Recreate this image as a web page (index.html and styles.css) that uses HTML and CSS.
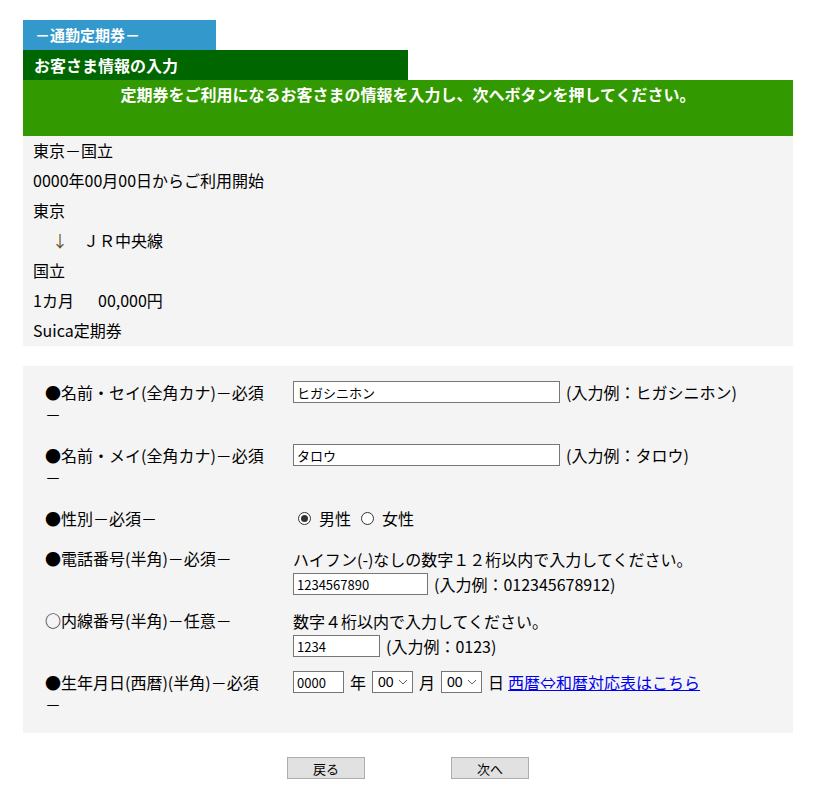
FILE: index.html
```html
<!DOCTYPE html>
<html lang="ja">
<head>
    <meta charset="UTF-8">
    <meta name="viewport" content="width=device-width, initial-scale=1.0">
    <title>お客さま情報の入力 - 通勤定期券</title>
    <link rel="stylesheet" href="styles.css">
</head>
<body>
    <div class="page">
        <div class="tab">－通勤定期券－</div>
        <h1 class="page-title">お客さま情報の入力</h1>
        <p class="lead">定期券をご利用になるお客さまの情報を入力し、次へボタンを押してください。</p>

        <!-- 選択済みの定期券内容 -->
        <div class="route">
            <div class="route-line">東京－国立</div>
            <div class="route-line">0000年00月00日からご利用開始</div>
            <div class="route-line">東京</div>
            <div class="route-line route-via"><span class="arrow">↓</span><span>ＪＲ中央線</span></div>
            <div class="route-line">国立</div>
            <div class="route-line"><span class="term">1カ月</span>00,000円</div>
            <div class="route-line">Suica定期券</div>
        </div>

        <form class="info-form" id="infoForm">
            <div class="form-row">
                <label class="form-label" for="seiKana">●名前・セイ(全角カナ)－必須<br>－</label>
                <div class="input-line">
                    <input class="text-input input-name" type="text" id="seiKana" value="ヒガシニホン">
                    <span>(入力例：ヒガシニホン)</span>
                </div>
            </div>
            <div class="form-row">
                <label class="form-label" for="meiKana">●名前・メイ(全角カナ)－必須<br>－</label>
                <div class="input-line">
                    <input class="text-input input-name" type="text" id="meiKana" value="タロウ">
                    <span>(入力例：タロウ)</span>
                </div>
            </div>
            <div class="form-row row-radio">
                <div class="form-label">●性別－必須－</div>
                <div class="radios">
                    <label class="radio"><input type="radio" name="sex" value="m" checked>男性</label>
                    <label class="radio"><input type="radio" name="sex" value="f">女性</label>
                </div>
            </div>
            <div class="form-row row-stacked">
                <label class="form-label" for="tel">●電話番号(半角)－必須－</label>
                <div>
                    <div class="hint">ハイフン(-)なしの数字１２桁以内で入力してください。</div>
                    <div class="input-line">
                        <input class="text-input input-tel" type="text" id="tel" value="1234567890">
                        <span>(入力例：012345678912)</span>
                    </div>
                </div>
            </div>
            <div class="form-row row-stacked">
                <label class="form-label" for="ext">○内線番号(半角)－任意－</label>
                <div>
                    <div class="hint">数字４桁以内で入力してください。</div>
                    <div class="input-line">
                        <input class="text-input input-ext" type="text" id="ext" value="1234">
                        <span>(入力例：0123)</span>
                    </div>
                </div>
            </div>
            <div class="form-row">
                <label class="form-label" for="birthYear">●生年月日(西暦)(半角)－必須<br>－</label>
                <div class="input-line">
                    <input class="text-input input-year" type="text" id="birthYear" value="0000">
                    <span>年</span>
                    <select class="select-input"><option>00</option></select>
                    <span>月</span>
                    <select class="select-input"><option>00</option></select>
                    <span>日</span>
                    <a href="#" class="calendar-link">西暦⇔和暦対応表はこちら</a>
                </div>
            </div>
        </form>

        <div class="actions">
            <button type="button" class="btn">戻る</button>
            <button type="submit" form="infoForm" class="btn">次へ</button>
        </div>
    </div>
</body>
</html>
```

FILE: styles.css
```css
:root {
    --tab-blue: #3399cc;
    --dark-green: #006600;
    --green: #339900;
    --panel: #f4f4f4;
    --text: #000000;
    --white: #ffffff;
    --input-border: #767676;
    --link: #0000ee;
}

body {
    font-family: "Noto Sans CJK JP", "Noto Sans", sans-serif;
    font-size: 16px;
    color: var(--text);
    margin: 0;
    padding: 20px 23px;
}

.page {
    width: 770px;
}

.tab {
    width: 193px;
    height: 30px;
    box-sizing: border-box;
    padding-left: 12px;
    line-height: 30px;
    background: var(--tab-blue);
    color: var(--white);
    font-size: 15px;
    font-weight: bold;
}

.page-title {
    width: 385px;
    height: 30px;
    box-sizing: border-box;
    margin: 0;
    padding-left: 11px;
    line-height: 30px;
    background: var(--dark-green);
    color: var(--white);
    font-size: 16px;
    font-weight: bold;
}

.lead {
    height: 56px;
    box-sizing: border-box;
    margin: 0;
    padding-top: 3px;
    line-height: 22px;
    background: var(--green);
    color: var(--white);
    font-weight: bold;
    text-align: center;
}

.route {
    background: var(--panel);
    padding: 0 10px;
}

.route-line {
    line-height: 28px;
    height: 30px;
}

.route-via .arrow {
    display: inline-block;
    width: 50px;
    padding-left: 19px;
    box-sizing: border-box;
    color: #6b4a2a;
}

.term {
    display: inline-block;
    width: 65px;
}

.info-form {
    margin-top: 20px;
    background: var(--panel);
    padding: 15px 22px 18px;
}

.form-row {
    display: grid;
    grid-template-columns: 248px 1fr;
    align-items: start;
    margin-bottom: 19px;
}

.row-radio {
    margin-bottom: 18px;
}

.row-stacked {
    margin-bottom: 14px;
}

.form-row:last-child {
    margin-bottom: 0;
}

.form-label {
    line-height: 22px;
}

.hint {
    line-height: 24px;
}

.input-line {
    display: flex;
    align-items: center;
    gap: 6px;
    height: 22px;
    line-height: 22px;
    white-space: nowrap;
}

.hint + .input-line {
    margin-top: 2px;
}

.text-input {
    height: 22px;
    box-sizing: border-box;
    margin: 0;
    border: 1px solid var(--input-border);
    padding: 1px 3px;
    font-family: "Noto Sans CJK JP", "Liberation Sans", sans-serif;
    font-size: 13px;
    background: var(--white);
    border-radius: 0;
    outline: none;
}

.input-name {
    width: 267px;
}

.input-tel {
    width: 135px;
}

.input-ext {
    width: 87px;
}

.input-year {
    width: 51px;
}

.radios {
    display: flex;
    gap: 10px;
    padding-left: 5px;
    line-height: 22px;
}

.radio {
    display: flex;
    align-items: center;
    gap: 8px;
}

.radio input {
    appearance: none;
    width: 13px;
    height: 13px;
    margin: 0;
    border: 1px solid #333;
    border-radius: 50%;
    background: var(--white);
    display: grid;
    place-content: center;
}

.radio input:checked::before {
    content: "";
    width: 7px;
    height: 7px;
    border-radius: 50%;
    background: #333;
}

.select-input {
    appearance: none;
    width: 41px;
    height: 22px;
    box-sizing: border-box;
    margin: 0;
    padding: 0 0 0 5px;
    border: 1px solid var(--input-border);
    border-radius: 0;
    font-size: 14px;
    font-family: "Liberation Sans", sans-serif;
    background: var(--white) url("data:image/svg+xml,%3Csvg xmlns='http://www.w3.org/2000/svg' width='10' height='6' viewBox='0 0 10 6'%3E%3Cpath d='M1 1l4 4 4-4' fill='none' stroke='%23666' stroke-width='1'/%3E%3C/svg%3E") no-repeat right 4px center;
}

.calendar-link {
    margin-left: -2px;
    color: var(--link);
}

.actions {
    display: flex;
    justify-content: center;
    gap: 86px;
    margin-top: 24px;
}

.btn {
    width: 78px;
    height: 22px;
    padding: 0;
    border: 1px solid #adadad;
    background: #e1e1e1;
    font-family: "Noto Sans CJK JP", sans-serif;
    font-size: 13px;
    color: var(--text);
    cursor: pointer;
}
```
